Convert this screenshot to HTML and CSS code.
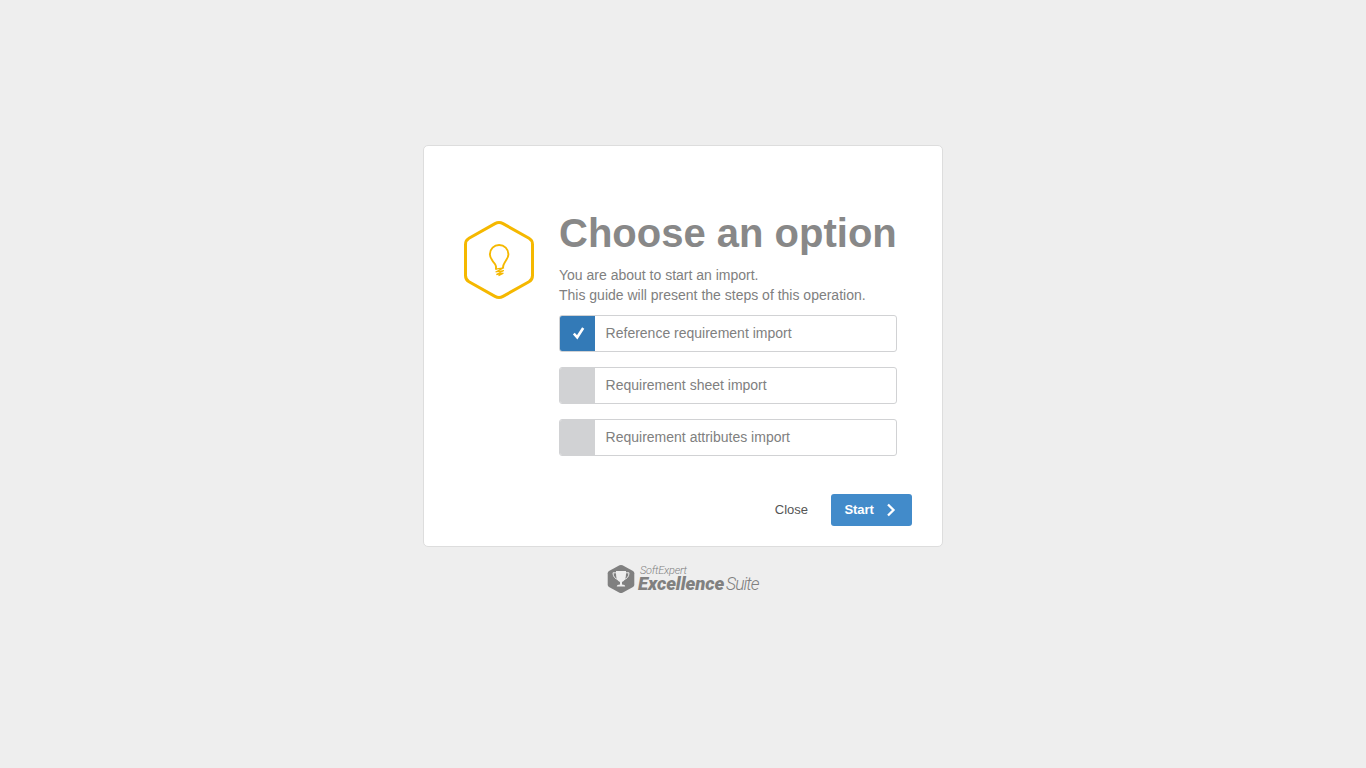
FILE: index.html
```html
<!DOCTYPE html>
<html lang="en">
<head>
<meta charset="utf-8">
<title>Choose an option</title>
<link rel="stylesheet" href="styles.css">
</head>
<body>
<main class="card">
  <div class="card-body">
    <svg class="guide-icon" viewBox="0 0 72 80" width="72" height="80" fill="none" stroke="#f5b800">
      <path stroke-width="3" stroke-linejoin="round" d="M32 3.6Q36 1.4 40 3.6L66 18.200Q69.500 20.200 69.500 24.500V55.500Q69.500 59.800 66 61.800L40 76.400Q36 78.600 32 76.400L6 61.800Q2.500 59.800 2.500 55.500V24.500Q2.500 20.200 6 18.200Z"/>
      <path stroke-width="1.900" stroke-linejoin="round" d="M33 49.500V46.500C32.600 43.800 31 43.200 29.800 41.300C28.500 39 26.900 37.500 26.900 34.200A9.250 9.250 0 0 1 45.400 34.200C45.400 37.500 43.800 39 42.500 41.300C41.300 43.200 40.200 44 39.900 48"/>
      <path stroke-width="1.200" stroke-linejoin="bevel" d="M32.400 49.200L41 47.800L32.600 52L40.800 50.500L33.400 54.600L40.400 53.200L35.500 55.700"/>
    </svg>
    <section class="content">
      <h1 class="title">Choose an option</h1>
      <p class="intro">You are about to start an import.<br>This guide will present the steps of this operation.</p>
      <div class="options">
        <div class="option selected">
          <span class="box"><svg width="12" height="14" viewBox="0 0 12 14" fill="none" stroke="#fff" stroke-width="2.600"><path d="M.8 6.500L4.200 10.300L10.200 1"/></svg></span>
          <span class="label">Reference requirement import</span>
        </div>
        <div class="option"><span class="box"></span><span class="label">Requirement sheet import</span></div>
        <div class="option"><span class="box"></span><span class="label">Requirement attributes import</span></div>
      </div>
    </section>
  </div>
  <footer class="actions">
    <button class="close">Close</button>
    <button class="start"><span class="start-text">Start</span><svg width="10" height="14" viewBox="0 0 10 14" fill="none" stroke="#fff" stroke-width="2.300"><path d="M2 1.500L7.500 7L2 12.500"/></svg></button>
  </footer>
</main>
<div class="brand">
  <svg width="28" height="30" viewBox="0 0 28 30">
    <path fill="#808080" d="M12.500 1.300Q14 .5 15.500 1.300L26 7Q27.300 7.800 27.300 9.300V20.700Q27.300 22.200 26 23L15.500 28.700Q14 29.500 12.500 28.700L2 23Q.7 22.200 .7 20.700V9.300Q.7 7.800 2 7Z"/>
    <path fill="#eee" d="M9 7H19V10C19 14.500 17.500 17.200 15 18V20.500Q18.200 20.700 18.200 22.500H9.800Q9.800 20.700 13 20.500V18C10.500 17.200 9 14.500 9 10Z"/>
    <path fill="none" stroke="#eee" stroke-width="1" d="M9.500 8.800H6C6 12.500 8 15 11.200 15.500M18.500 8.800H22C22 12.500 20 15 16.800 15.500"/>
  </svg>
  <div class="brand-text">
    <span class="company">SoftExpert</span>
    <span class="product"><b>Excellence</b><i>Suite</i></span>
  </div>
</div>
</body>
</html>
```
FILE: styles.css
```css
* { box-sizing: border-box; }
body {
  margin: 0;
  min-height: 768px;
  padding-top: 145px;
  display: flex;
  flex-direction: column;
  align-items: center;
  background: #eee;
  color: #808080;
  font: 14px/20px "Liberation Sans", Arial, sans-serif;
}
.card {
  width: 520px;
  height: 402px;
  background: #fff;
  border: 1px solid #ddd;
  border-radius: 5px;
}
.card-body { display: flex; padding: 65px 45px 0 39px; }
.guide-icon { flex: none; margin: 9px 24px 0 0; }
.content { width: 338px; }
.title {
  margin: 0 0 10px;
  font-size: 40px;
  line-height: 44px;
  color: #888;
  white-space: nowrap;
}
.intro { margin: 0 0 10px; white-space: nowrap; }
.options { display: grid; gap: 15px; }
.option {
  display: flex;
  height: 37px;
  border: 1px solid #d1d2d4;
  border-radius: 3px;
  overflow: hidden;
}
.box {
  width: 35px;
  display: flex;
  align-items: center;
  justify-content: center;
  background: #d1d2d4;
}
.selected .box { background: #337ab7; padding-left: 2px; }
.label { padding-left: 10.6px; line-height: 35px; }
.actions { display: flex; justify-content: flex-end; padding: 38px 30px 0 0; }
button {
  height: 32px;
  padding: 0;
  border: 0;
  font: 13px/18px "Liberation Sans", Arial, sans-serif;
}
.close { margin-right: 23px; background: none; color: #555; }
.start {
  width: 81px;
  display: flex;
  align-items: center;
  padding-left: 13.5px;
  gap: 12.3px;
  border-radius: 3px;
  background: #428bca;
  color: #fff;
  font-weight: bold;
}
.start-text { letter-spacing: -.1px; }
.brand { display: flex; gap: 3px; margin-top: 17px; width: 152px; }
.brand svg { flex: none; }
.brand-text { padding-top: 1px; font-family: Roboto, sans-serif; font-style: italic; white-space: nowrap; }
.company {
  display: block;
  padding-left: 2px;
  font-size: 11px;
  line-height: 12px;
  letter-spacing: -.25px;
  font-weight: 300;
}
.product { display: flex; gap: 2px; font-size: 18.5px; line-height: 14px; }
.product b { font-weight: 900; letter-spacing: -.1px; }
.product i { font-size: 17.5px; font-weight: 300; letter-spacing: -1px; }
```
